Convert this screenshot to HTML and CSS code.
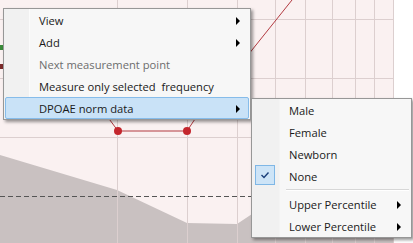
FILE: index.html
```html
<!DOCTYPE html>
<html lang="en">
  <head>
    <meta charset="UTF-8" />
    <title>DPOAE chart menu</title>
    <link rel="stylesheet" href="styles.css">
  </head>
  <body>
    <div class="chart">
      <svg width="413" height="243" viewBox="0 0 413 243">
        <rect x="0" y="0" width="393" height="243" fill="#faf1f1" />
        <polygon points="0,155 117,190 187,223 237,224 252,214 300,202 393,192 393,243 0,243" fill="#c9c1c1" />
        <g stroke="#dccfcf" stroke-width="1">
          <line x1="0" y1="19.5" x2="393" y2="19.5" />
          <line x1="0" y1="78.5" x2="393" y2="78.5" />
          <line x1="0" y1="137.5" x2="393" y2="137.5" />
          <line x1="117.5" y1="0" x2="117.5" y2="243" />
          <line x1="187.5" y1="0" x2="187.5" y2="243" />
          <line x1="237.5" y1="0" x2="237.5" y2="243" />
          <line x1="275.5" y1="0" x2="275.5" y2="243" />
          <line x1="305.5" y1="0" x2="305.5" y2="243" />
          <line x1="332.5" y1="0" x2="332.5" y2="243" />
          <line x1="355.5" y1="0" x2="355.5" y2="243" />
          <line x1="374.5" y1="0" x2="374.5" y2="243" />
          <line x1="393.5" y1="0" x2="393.5" y2="243" />
        </g>
        <line x1="0" y1="196.5" x2="393" y2="196.5" stroke="#555" stroke-dasharray="5 3" />
        <polyline points="104,112 118,131 187,131 197,116" fill="none" stroke="#b23a40" stroke-width="1" />
        <line x1="240" y1="65" x2="292" y2="0" stroke="#b23a40" stroke-width="1" />
        <circle cx="118" cy="131" r="4" fill="#c4262d" />
        <circle cx="187" cy="131" r="4" fill="#c4262d" />
        <rect x="0" y="45" width="3" height="5" fill="#3a8a3a" />
        <rect x="0" y="64" width="3" height="5" fill="#7a2a2a" />
      </svg>
    </div>

    <div class="menu main-menu">
      <div class="item">View<span class="arrow"></span></div>
      <div class="item">Add<span class="arrow"></span></div>
      <div class="item disabled">Next measurement point</div>
      <div class="item">Measure only selected&nbsp; frequency</div>
      <div class="item active">DPOAE norm data<span class="arrow"></span></div>
    </div>

    <div class="menu sub-menu">
      <div class="item">Male</div>
      <div class="item">Female</div>
      <div class="item">Newborn</div>
      <div class="item checked">
        <span class="check">
          <svg width="10" height="8" viewBox="0 0 10 8"><polyline points="1.5,4 4,6.5 8.5,1.5" fill="none" stroke="#1a3f7a" stroke-width="1.4" /></svg>
        </span>
        None
      </div>
      <div class="separator"></div>
      <div class="item">Upper Percentile<span class="arrow"></span></div>
      <div class="item">Lower Percentile<span class="arrow"></span></div>
    </div>
  </body>
</html>
```

FILE: styles.css
```css
body {
  margin: 0;
  width: 413px;
  height: 243px;
  overflow: hidden;
  background: #ffffff;
  font-family: "Open Sans", "Noto Sans", sans-serif;
  font-size: 11.2px;
  color: #1a1a1a;
}

.chart svg {
  display: block;
}

.menu {
  position: absolute;
  background: #f5f5f5;
  border: 1px solid #979797;
  box-shadow: 2px 2px 3px rgba(0, 0, 0, 0.4);
}

.main-menu {
  left: 3px;
  top: 8px;
  width: 246px;
  background: linear-gradient(to right, #f1f1f1 0, #f1f1f1 24px, #e3e3e3 24px, #ffffff 25px, #f7f7f7 26px);
}

.sub-menu {
  left: 251px;
  top: 98px;
  width: 159px;
  background: linear-gradient(to right, #f1f1f1 0, #f1f1f1 27px, #f7f7f7 28px);
}

.item {
  position: relative;
  height: 22px;
  line-height: 21px;
  padding-left: 33px;
  box-sizing: border-box;
  border: 1px solid transparent;
  margin: 0 1px;
  white-space: nowrap;
}

.sub-menu .item {
  padding-left: 35px;
}

.item.disabled {
  color: #6d6d6d;
}

.item.active {
  background: #c9e2f7;
  border-color: #86bcea;
  border-radius: 2px;
}

.arrow {
  position: absolute;
  right: 8px;
  top: 7px;
  width: 0;
  height: 0;
  border-top: 4px solid transparent;
  border-bottom: 4px solid transparent;
  border-left: 4px solid #000;
}

.check {
  position: absolute;
  left: 1px;
  top: -1px;
  width: 20px;
  height: 20px;
  box-sizing: border-box;
  background: #cde4f7;
  border: 1px solid #7fb7e6;
  display: flex;
  align-items: center;
  justify-content: center;
}

.separator {
  height: 6px;
  margin-left: 34px;
  margin-right: 2px;
  background: linear-gradient(to bottom, transparent 2px, #d7d7d7 2px, #d7d7d7 3px, #ffffff 3px, #ffffff 4px, transparent 4px);
}
```
